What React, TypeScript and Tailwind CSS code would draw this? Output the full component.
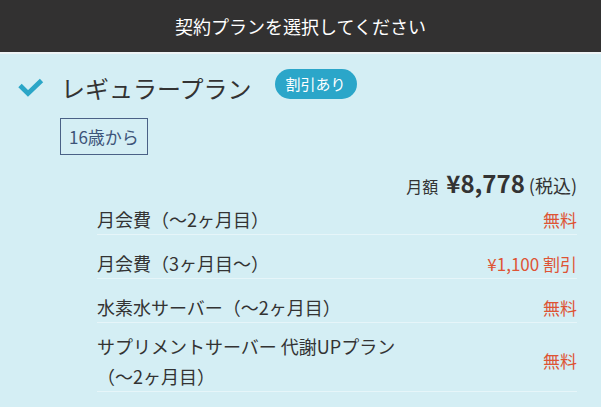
import React from "react";

const font = { fontFamily: '"Noto Sans CJK JP", "Noto Sans", sans-serif' };

function Row({
  left,
  right,
  pt = "pt-[14px]",
  lh = "leading-[29px]",
}: {
  left: React.ReactNode;
  right: React.ReactNode;
  pt?: string;
  lh?: string;
}) {
  return (
    <div
      className={`flex items-center justify-between border-b border-[#e6f5f9] pb-0 ${pt}`}
    >
      <div className={`text-[18px] text-[#333333] ${lh}`}>{left}</div>
      <div className="text-[17px] leading-[28px] text-[#de5435]">{right}</div>
    </div>
  );
}

export default function App() {
  return (
    <div className="w-[601px] h-[407px] overflow-hidden bg-[#d4eef4]" style={font}>
      <div className="h-[54px] bg-[#323131] border-b-2 border-[#eef4f6] flex items-center justify-center">
        <span className="text-white text-[18px] leading-[26px]">
          契約プランを選択してください
        </span>
      </div>

      <div className="flex items-center pl-[18px] pt-[15px]">
        <svg width="26" height="20" viewBox="0 0 26 20" className="shrink-0">
          <path
            d="M2 7.5 L10 15.5 L23.5 2.5"
            fill="none"
            stroke="#2ba6c7"
            strokeWidth="4.8"
          />
        </svg>
        <span className="ml-[17px] text-[24px] leading-[36px] text-[#333333]">
          レギュラープラン
        </span>
        <span className="ml-[23px] mb-[8px] h-[30px] px-[11px] rounded-full bg-[#2ba6c9] text-white text-[15px] leading-[30px]">
          割引あり
        </span>
      </div>

      <div className="pl-[60px] mt-[11px]">
        <div className="inline-block border border-[#4a6186] px-[8px] text-[17px] leading-[35px] text-[#3d5479]">
          16歳から
        </div>
      </div>

      <div className="ml-[97px] mr-[24px]">
        <div className="mt-[12px] flex items-baseline justify-end h-[31px] text-[#333333]">
          <span className="text-[16px]">月額</span>
          <span className="ml-[8px] text-[24px] font-bold leading-[31px]">¥8,778</span>
          <span className="ml-[4px] text-[18px]">(税込)</span>
        </div>
        <Row pt="pt-[7px]" left="月会費（〜2ヶ月目）" right="無料" />
        <Row left="月会費（3ヶ月目〜）" right="¥1,100 割引" />
        <Row left="水素水サーバー（〜2ヶ月目）" right="無料" />
        <Row
          pt="pt-[8px]"
          lh="leading-[30px]"
          left={
            <>
              サプリメントサーバー 代謝UPプラン
              <br />
              （〜2ヶ月目）
            </>
          }
          right="無料"
        />
        <Row
          pt="pt-[8px]"
          lh="leading-[30px]"
          left={
            <>
              サプリメントサーバー ボディメイクプラン
              <br />
              （〜2ヶ月目）
            </>
          }
          right="無料"
        />
      </div>
    </div>
  );
}
